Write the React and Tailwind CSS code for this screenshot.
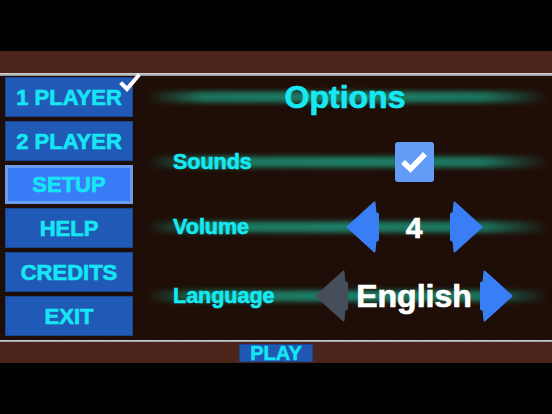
const menuItems = ['1 PLAYER', '2 PLAYER', 'SETUP', 'HELP', 'CREDITS', 'EXIT'];

// blurred teal streak that sits behind each options row
function Glow() {
    return (
        <div className="pointer-events-none absolute left-[14px] right-[4px] top-1/2 h-[11px] -translate-y-1/2 rounded-full bg-[linear-gradient(90deg,rgba(26,130,105,0)_0%,rgba(28,135,110,0.85)_14%,rgba(30,140,115,0.9)_50%,rgba(28,135,110,0.85)_84%,rgba(26,130,105,0)_100%)] blur-[2.5px]" />
    );
}

function Arrow({ dir = 'left', grey = false }) {
    const fill = grey ? '#464e5b' : '#3a7ef6';
    return (
        <svg width="33" height="52" viewBox="0 0 33 52" className={dir === 'right' ? '-scale-x-100' : ''}>
            <polygon
                points="1.5,26 28.5,1.5 29.5,12 32,13 32,39 29.5,40 28.5,50.5"
                fill={fill}
                stroke={fill}
                strokeWidth="2"
                strokeLinejoin="round"
            />
        </svg>
    );
}

function MenuButton({ label, active }) {
    if (active) {
        return (
            <div className="h-[39px] w-[128px] bg-[#6c9ded] p-[3px]">
                <div className="flex h-full w-full items-center justify-center bg-[#3a7bf8] text-[22px] font-bold text-[#16e6f4] [-webkit-text-stroke:0.6px_#16e6f4]">
                    {label}
                </div>
            </div>
        );
    }
    return (
        <div className="flex h-[40px] w-[128px] items-center justify-center border border-[#1a4590] bg-[#215ab6] text-[22px] font-bold text-[#16e6f4] [-webkit-text-stroke:0.6px_#16e6f4]">
            {label}
        </div>
    );
}

export default function App() {
    return (
        <div className="flex h-[414px] w-[552px] flex-col overflow-hidden bg-black font-['Liberation_Sans',Arial,sans-serif]">
            <div className="h-[51px] shrink-0 bg-black" />
            {/* top brown rail */}
            <div className="h-[22px] shrink-0 bg-[#4d251a] bg-[radial-gradient(rgba(0,0,0,0.1)_1px,transparent_1px)] bg-[length:3px_3px]" />
            <div className="h-[3px] shrink-0 bg-[linear-gradient(#d8dadc,#8d9196)]" />

            {/* main panel */}
            <div className="relative flex h-[264px] shrink-0 bg-[#1f0e07]">
                <div className="flex flex-col gap-[4px] pl-[5px] pt-[1px]">
                    {menuItems.map((item) => (
                        <MenuButton key={item} label={item} active={item === 'SETUP'} />
                    ))}
                </div>

                {/* tick on 1 PLAYER */}
                <svg className="absolute left-[119px] top-[-3px]" width="22" height="20" viewBox="0 0 22 20">
                    <path d="M3 11 L8 16 L19 3" fill="none" stroke="#ffffff" strokeWidth="4" strokeLinecap="square" />
                </svg>

                <div className="flex flex-1 flex-col">
                    <div className="relative flex h-[42px] items-center justify-center pl-[5px]">
                        <Glow />
                        <span className="relative text-[32px] font-bold text-[#16e8f4] [-webkit-text-stroke:0.7px_#16e8f4]">Options</span>
                    </div>

                    <div className="relative mt-[22px] flex h-[44px] items-center pl-[40px]">
                        <Glow />
                        <span className="relative w-[133px] text-[21.5px] font-bold text-[#16e8f4] [-webkit-text-stroke:0.6px_#16e8f4]">Sounds</span>
                        <div className="relative flex w-[216px] justify-center">
                            <div className="flex h-[40px] w-[39px] items-center justify-center rounded-[3px] bg-[#629cf6]">
                                <svg width="30" height="24" viewBox="0 0 30 24">
                                    <path d="M4 12 L11.5 19 L26 4" fill="none" stroke="#ffffff" strokeWidth="5.5" />
                                </svg>
                            </div>
                        </div>
                    </div>

                    <div className="relative mt-[21px] flex h-[44px] items-center pl-[40px]">
                        <Glow />
                        <span className="relative w-[133px] text-[21.5px] font-bold text-[#16e8f4] [-webkit-text-stroke:0.6px_#16e8f4]">Volume</span>
                        <div className="relative flex w-[216px] items-center justify-center">
                            <Arrow />
                            <span className="w-[71px] text-center text-[30px] font-bold text-white [-webkit-text-stroke:0.7px_#ffffff]">4</span>
                            <Arrow dir="right" />
                        </div>
                    </div>

                    <div className="relative mt-[21px] flex h-[52px] items-center pl-[40px]">
                        <Glow />
                        <span className="relative w-[133px] text-[21.5px] font-bold text-[#16e8f4] [-webkit-text-stroke:0.6px_#16e8f4]">Language</span>
                        <div className="relative flex w-[216px] items-center justify-center">
                            <Arrow grey />
                            <span className="w-[132px] text-center text-[32px] font-bold text-white [-webkit-text-stroke:0.7px_#ffffff]">English</span>
                            <Arrow dir="right" />
                        </div>
                    </div>
                </div>
            </div>

            <div className="h-[2px] shrink-0 bg-[linear-gradient(#d8dadc,#8d9196)]" />
            {/* bottom brown rail */}
            <div className="flex h-[21px] shrink-0 items-start bg-[#4d251a] bg-[radial-gradient(rgba(0,0,0,0.1)_1px,transparent_1px)] bg-[length:3px_3px] pl-[239px] pt-[2px]">
                <div className="flex h-[18px] w-[74px] items-center justify-center border border-[#1a4590] bg-[#2158b4] text-[20px] font-bold leading-none text-[#16e6f4] [-webkit-text-stroke:0.5px_#16e6f4]">
                    PLAY
                </div>
            </div>
            <div className="flex-1 bg-black" />
        </div>
    );
}
